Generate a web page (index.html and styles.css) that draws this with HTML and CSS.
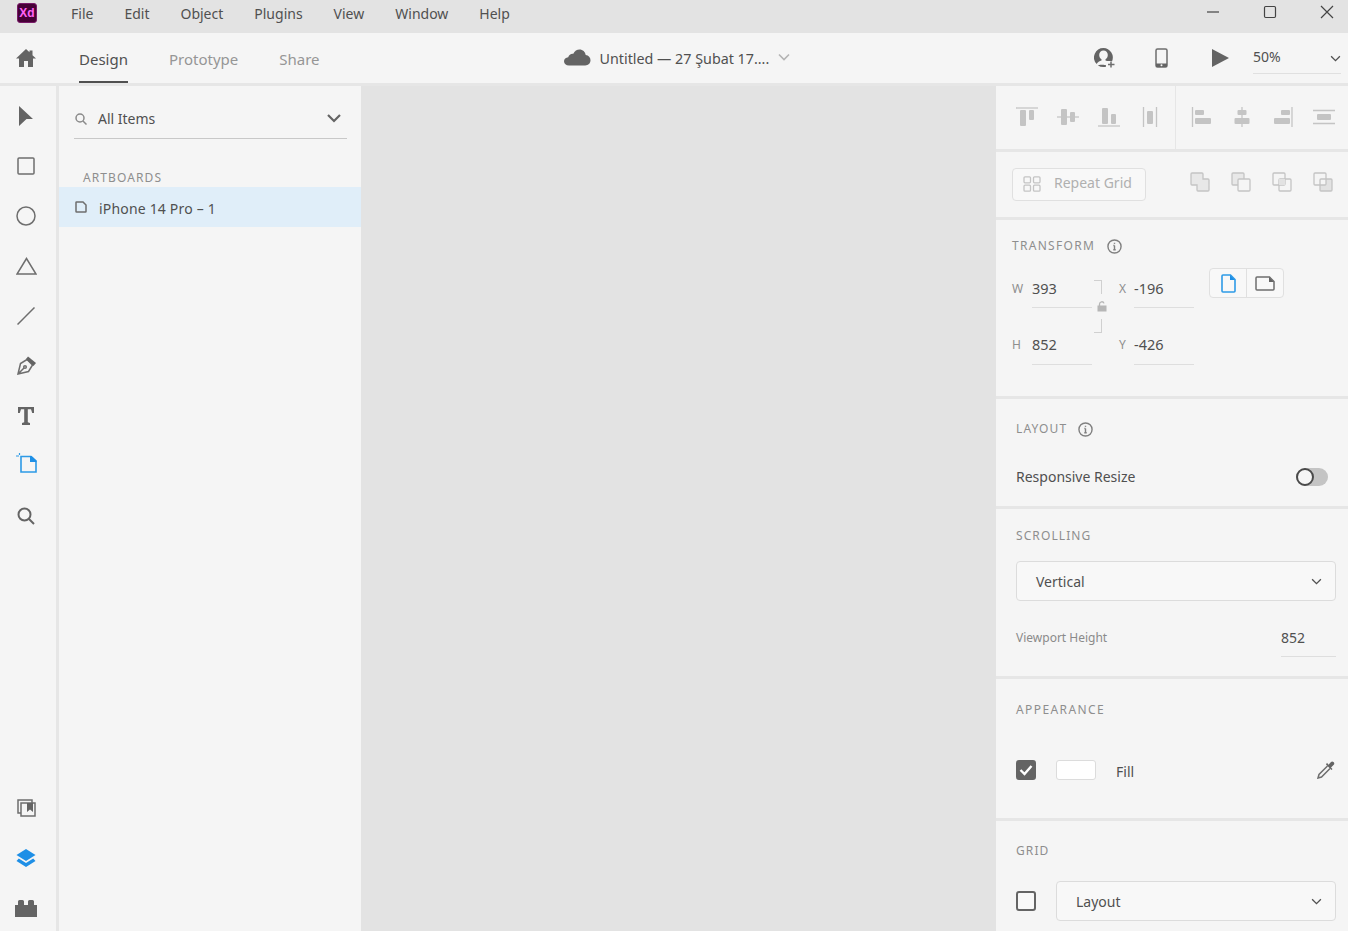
FILE: index.html
```html
<!DOCTYPE html>
<html lang="tr">
<head>
<meta charset="utf-8">
<title>Adobe XD</title>
<link rel="stylesheet" href="styles.css">
</head>
<body>
<div class="app">
  <header class="titlebar">
    <div class="logo">Xd</div>
    <nav class="menu">
      <span>File</span><span>Edit</span><span>Object</span><span>Plugins</span><span>View</span><span>Window</span><span>Help</span>
    </nav>
    <div class="winctl">
      <svg class="wc" viewBox="0 0 14 14"><path d="M1 7h12" /></svg>
      <svg class="wc" viewBox="0 0 14 14"><rect x="1.5" y="1.5" width="11" height="11" rx="1.2" /></svg>
      <svg class="wc" viewBox="0 0 14 14"><path d="M1 1l12 12M13 1L1 13" /></svg>
    </div>
  </header>

  <div class="toolbar">
    <div class="home">
      <svg viewBox="0 0 20 18" width="20" height="18"><path class="fill" d="M10 0L0 9.500h3V18h5v-6h4v6h5V9.500h3L16.500 6.200V1.500h-3v1.800z"/></svg>
    </div>
    <div class="tabs">
      <span class="tab active">Design</span><span class="tab">Prototype</span><span class="tab">Share</span>
    </div>
    <div class="doc">
      <svg viewBox="0 0 27 17" width="27" height="17"><path class="fill" d="M5 16.500C2 16.500 0 14.800 0 12.300c0-2.300 1.800-3.900 4.200-4.100C5 5.700 7 4.500 9.300 4.800 10.500 2 13 .5 15.500.5c3.300 0 5.800 2.300 6.200 5.600 2.900.4 4.800 2.500 4.800 5.200 0 3-2.200 5.200-5.300 5.200z"/></svg>
      <span class="doc-name">Untitled — 27 Şubat 17....</span>
      <svg class="chev light" viewBox="0 0 12 8" width="12" height="8"><path d="M1 1.500l5 5 5-5"/></svg>
    </div>
    <div class="actions">
      <svg viewBox="0 0 21 20" width="21" height="20"><path class="fill" d="M9.500 0a9.500 9.500 0 0 0-6.800 16.100C3.500 14.200 5.500 13 7.500 12.600v-1.300C6 10.400 5.200 8.800 5.200 7c0-2.600 1.800-4.500 4.300-4.500s4.300 1.900 4.300 4.500c0 1.800-.8 3.400-2.300 4.300v1.300c.5.100 1 .3 1.500.5h3.600c.6 0 1 .1 1.400.3A9.500 9.500 0 0 0 9.500 0zM3.800 17.200A9.500 9.500 0 0 0 12 18.700v-1.500h-.1c-1.600-.3-3-.8-8.100 0z"/><path class="stroke" d="M17 13.500v6M14 16.500h6.500"/></svg>
      <svg class="act-device" viewBox="0 0 13 20" width="13" height="20"><rect class="stroke" x="1" y="1" width="11" height="18" rx="1.500"/><rect class="fill" x="1" y="15.500" width="11" height="3.500"/><circle cx="6.500" cy="17.200" r="1" fill="#f5f5f5"/></svg>
      <svg class="act-play" viewBox="0 0 17 18" width="17" height="18"><path class="fill" d="M0 0l17 9-17 9z"/></svg>
      <div class="zoom">
        <span>50%</span>
        <svg class="chev" viewBox="0 0 12 8" width="11" height="7"><path d="M1 1.500l5 5 5-5"/></svg>
      </div>
    </div>
  </div>

  <div class="main">
    <aside class="rail">
      <div class="rail-group">
        <div class="tool"><svg viewBox="0 0 14 20" width="14" height="20"><path class="fill" d="M0 0l14 13H7.500L0 20z"/></svg></div>
        <div class="tool"><svg viewBox="0 0 18 18" width="18" height="18"><rect class="stroke" x="1" y="1" width="16" height="16" rx="1"/></svg></div>
        <div class="tool"><svg viewBox="0 0 20 20" width="20" height="20"><circle class="stroke" cx="10" cy="10" r="9"/></svg></div>
        <div class="tool"><svg viewBox="0 0 21 18" width="21" height="18"><path class="stroke" d="M10.500 1.500L1 17h19z"/></svg></div>
        <div class="tool"><svg viewBox="0 0 18 18" width="18" height="18"><path class="stroke" d="M.5 17.500l17-17"/></svg></div>
        <div class="tool"><svg class="up-1" viewBox="0 0 19 19" width="19" height="19"><path class="stroke" d="M1 18l2.500-10.500L10 3.500l5.500 5.500-4 6.500zM1 18l6-6"/><circle class="stroke" cx="8" cy="11" r="1.300"/><path class="fill" d="M11 .5l8 6.500-2.500 3-7.500-7z"/></svg></div>
        <div class="tool"><svg viewBox="0 0 16 18" width="16" height="18"><path class="fill" d="M0 0h16v6h-1.800L13 2.300H9.800v13l2.200.7v2H4v-2l2.200-.7v-13H3L1.800 6H0z"/></svg></div>
        <div class="tool"><svg class="up-2" viewBox="0 0 21 20" width="21" height="20"><path class="blue-s" d="M5 3.500h10l5 4.500V19H5z"/><path class="blue-f" d="M14 3h1.500l5 4.500V9H14z"/><path class="blue-s thin" d="M0 3h3M3.500 0v2"/></svg></div>
        <div class="tool"><svg viewBox="0 0 18 18" width="18" height="18"><circle class="stroke thick" cx="7.500" cy="7.500" r="6"/><path class="stroke thick" d="M12 12l5 5"/></svg></div>
      </div>
      <div class="rail-group bottom">
        <div class="tool"><svg viewBox="0 0 19 18" width="19" height="18"><path class="stroke" d="M4 14H1V1h14v3"/><rect class="stroke" x="4" y="4" width="14" height="13"/><path class="fill" d="M10 4h6v9l-3-2.500L10 13z"/></svg></div>
        <div class="tool"><svg viewBox="0 0 20 18" width="20" height="18"><path class="blue-f" d="M10 0l9.500 6-9.500 6-9.500-6z"/><path class="blue-f" d="M2.800 9.500l7.200 4.500 7.200-4.500 2.300 2.500-9.500 6-9.500-6z"/></svg></div>
        <div class="tool"><svg viewBox="0 0 22 17" width="22" height="17"><path class="fill" d="M0 5h3V1.500A1.500 1.500 0 0 1 4.500 0h3A1.500 1.500 0 0 1 9 1.500V5h4V1.500A1.500 1.500 0 0 1 14.500 0h3A1.500 1.500 0 0 1 19 1.500V5h3v12H0z"/></svg></div>
      </div>
    </aside>

    <section class="layers">
      <div class="search">
        <svg viewBox="0 0 12 12" width="12" height="12"><circle class="stroke" cx="5" cy="5" r="4"/><path class="stroke" d="M8 8l3.500 3.500"/></svg>
        <span class="search-text">All Items</span>
        <svg class="chev strong" viewBox="0 0 14 9" width="14" height="9"><path d="M1 1l6 6 6-6"/></svg>
      </div>
      <div class="layers-title">ARTBOARDS</div>
      <div class="layer-row">
        <svg viewBox="0 0 12 12" width="12" height="12"><path class="stroke" d="M1 1.500A.5.500 0 0 1 1.500 1H8l3 3v6.500a.5.500 0 0 1-.5.500h-9a.5.500 0 0 1-.5-.5z"/></svg>
        <span class="layer-name">iPhone 14 Pro – 1</span>
      </div>
    </section>

    <div class="canvas"></div>

    <aside class="props">
      <div class="sec aligns">
        <div class="align-group first">
          <div class="ai"><svg viewBox="0 0 24 20" width="24" height="20"><path class="dis-s" d="M1 1h22"/><rect class="dis-f" x="5" y="3" width="6" height="16" rx="1"/><rect class="dis-f" x="14" y="3" width="5" height="10" rx="1"/></svg></div>
          <div class="ai"><svg viewBox="0 0 24 20" width="24" height="20"><path class="dis-s" d="M1 10h22"/><rect class="dis-f" x="5" y="2" width="6" height="16" rx="1"/><rect class="dis-f" x="14" y="5" width="5" height="10" rx="1"/></svg></div>
          <div class="ai"><svg viewBox="0 0 24 20" width="24" height="20"><path class="dis-s" d="M1 19h22"/><rect class="dis-f" x="5" y="1" width="6" height="16" rx="1"/><rect class="dis-f" x="14" y="7" width="5" height="10" rx="1"/></svg></div>
          <div class="ai"><svg viewBox="0 0 24 20" width="24" height="20"><path class="dis-s" d="M5.500 0v20M18.500 0v20"/><rect class="dis-f" x="9" y="4" width="6" height="13" rx="1"/></svg></div>
        </div>
        <div class="align-group">
          <div class="ai"><svg viewBox="0 0 24 20" width="24" height="20"><path class="dis-s" d="M3.500 0v20"/><rect class="dis-f" x="6" y="3" width="9" height="5" rx="1"/><rect class="dis-f" x="6" y="11" width="16" height="6" rx="1"/></svg></div>
          <div class="ai"><svg viewBox="0 0 24 20" width="24" height="20"><path class="dis-s" d="M12 0v20"/><rect class="dis-f" x="7.500" y="3" width="9" height="5" rx="1"/><rect class="dis-f" x="4.500" y="11" width="15" height="6" rx="1"/></svg></div>
          <div class="ai"><svg viewBox="0 0 24 20" width="24" height="20"><path class="dis-s" d="M21 0v20"/><rect class="dis-f" x="10" y="3" width="9" height="5" rx="1"/><rect class="dis-f" x="3" y="11" width="16" height="6" rx="1"/></svg></div>
          <div class="ai"><svg viewBox="0 0 24 20" width="24" height="20"><path class="dis-s" d="M1 3.500h22M1 16.500h22"/><rect class="dis-f" x="5" y="7" width="14" height="6" rx="1"/></svg></div>
        </div>
      </div>

      <div class="sec repeat">
        <div class="rg-btn">
          <svg viewBox="0 0 18 16" width="18" height="16"><rect class="dis-s" x="1" y=".8" width="6.500" height="6" rx="1"/><rect class="dis-s" x="10.500" y=".8" width="6.500" height="6" rx="1"/><rect class="dis-s" x="1" y="9.200" width="6.500" height="6" rx="1"/><rect class="dis-s" x="10.500" y="9.200" width="6.500" height="6" rx="1"/></svg>
          <span class="rg-text">Repeat Grid</span>
        </div>
        <div class="bools">
          <svg viewBox="0 0 20 20" width="20" height="20"><path class="dis-s bf" d="M1 2a1 1 0 0 1 1-1h10a1 1 0 0 1 1 1v5h5a1 1 0 0 1 1 1v10a1 1 0 0 1-1 1H8a1 1 0 0 1-1-1v-5H2a1 1 0 0 1-1-1z"/></svg>
          <svg viewBox="0 0 20 20" width="20" height="20"><rect class="dis-s bf" x="1" y="1" width="12" height="12" rx="1"/><rect class="dis-s wf" x="7" y="7" width="12" height="12" rx="1"/></svg>
          <svg viewBox="0 0 20 20" width="20" height="20"><rect class="dis-s" x="1" y="1" width="12" height="12" rx="1"/><rect class="dis-s" x="7" y="7" width="12" height="12" rx="1"/><rect class="dis-f soft" x="7" y="7" width="6" height="6"/></svg>
          <svg viewBox="0 0 20 20" width="20" height="20"><path class="dis-f soft" d="M13 7h6v12H7v-6h6z"/><rect class="dis-s" x="1" y="1" width="12" height="12" rx="1"/><rect class="dis-s" x="7" y="7" width="12" height="12" rx="1"/></svg>
        </div>
      </div>

      <div class="sec transform">
        <div class="sec-head">
          <span class="label">TRANSFORM</span>
          <svg class="info" viewBox="0 0 16 16" width="15" height="15"><circle cx="8" cy="8" r="7"/><path d="M8 7v4.500M6.700 11.500h2.600M6.800 7H8"/><path d="M8 4v1.200"/></svg>
        </div>
        <div class="tf-body">
          <div class="tf-grid">
            <div class="field cell-w"><span class="axis">W</span><span class="val">393</span></div>
            <div class="link top"></div>
            <div class="field cell-x"><span class="axis">X</span><span class="val">-196</span></div>
            <div class="lock"><svg viewBox="0 0 10 11" width="10" height="11"><path class="dis-s-dark" d="M2.500 5V3a2.300 2.300 0 0 1 4.500-.6"/><rect x=".5" y="4.500" width="9" height="6" fill="#b6b6b6"/></svg></div>
            <div class="link bottom"></div>
            <div class="field cell-h"><span class="axis">H</span><span class="val">852</span></div>
            <div class="field cell-y"><span class="axis">Y</span><span class="val">-426</span></div>
          </div>
          <div class="orient">
            <div class="or-btn"><svg viewBox="0 0 15 19" width="15" height="19"><path class="blue-s" d="M1 2a1 1 0 0 1 1-1h7.500L14 5.500V17a1 1 0 0 1-1 1H2a1 1 0 0 1-1-1z"/><path class="blue-f" d="M9 1l5 5H9z"/></svg></div>
            <div class="or-btn"><svg viewBox="0 0 20 15" width="20" height="15"><path class="stroke" d="M1 2a1 1 0 0 1 1-1h12.500L19 5.500V13a1 1 0 0 1-1 1H2a1 1 0 0 1-1-1z"/><path class="fill" d="M14 1l5 5h-5z"/></svg></div>
          </div>
        </div>
      </div>

      <div class="sec layout">
        <div class="sec-head">
          <span class="label">LAYOUT</span>
          <svg class="info" viewBox="0 0 16 16" width="15" height="15"><circle cx="8" cy="8" r="7"/><path d="M8 7v4.500M6.700 11.500h2.600M6.800 7H8"/><path d="M8 4v1.200"/></svg>
        </div>
        <div class="resp">
          <span>Responsive Resize</span>
          <div class="toggle"><div class="knob"></div></div>
        </div>
      </div>

      <div class="sec scrolling">
        <div class="label">SCROLLING</div>
        <div class="select wide">
          <span>Vertical</span>
          <svg class="chev" viewBox="0 0 12 8" width="11" height="7"><path d="M1 1.500l5 5 5-5"/></svg>
        </div>
        <div class="viewport">
          <span class="vp-label">Viewport Height</span>
          <span class="vp-val">852</span>
        </div>
      </div>

      <div class="sec appearance">
        <div class="label">APPEARANCE</div>
        <div class="fill-row">
          <div class="check on"><svg viewBox="0 0 14 12" width="14" height="12"><path d="M1.500 6l4 4 7-8"/></svg></div>
          <div class="swatch"></div>
          <span class="fill-text">Fill</span>
          <svg class="dropper" viewBox="0 0 18 18" width="18" height="18"><path class="stroke" d="M10.500 5L2 13.500 1 17l3.500-1L13 7.500"/><path class="fill" d="M9 3.500l5.500 5.500 1-1-1.500-1.500 3-3a2 2 0 0 0-3-2.500l-2.500 2.800L10 1.800z"/></svg>
        </div>
      </div>

      <div class="sec grid-sec">
        <div class="label">GRID</div>
        <div class="grid-row">
          <div class="check"></div>
          <div class="select">
            <span>Layout</span>
            <svg class="chev" viewBox="0 0 12 8" width="11" height="7"><path d="M1 1.500l5 5 5-5"/></svg>
          </div>
        </div>
      </div>
    </aside>
  </div>
</div>
</body>
</html>
```
FILE: styles.css
```css
* { box-sizing: border-box; }
html, body { margin: 0; height: 100%; overflow: hidden; }
body {
  font-family: "Noto Sans", "Open Sans", "Liberation Sans", sans-serif;
  font-size: 14px;
  color: #505050;
  background: #f5f5f5;
}
svg { display: block; flex: none; }
.fill { fill: #646464; }
.stroke { fill: none; stroke: #6e6e6e; stroke-width: 1.5; }
.stroke.thick { stroke: #646464; stroke-width: 2; }
.blue-s { fill: none; stroke: #2d9ae6; stroke-width: 1.6; }
.blue-s.thin { stroke-width: 1.2; }
.blue-f { fill: #1e8fe6; }
.dis-s { fill: none; stroke: #c4c4c4; stroke-width: 1.300; }
.dis-f { fill: #c4c4c4; }
.dis-f.soft { fill: #e2e2e2; }
.dis-s.bf { fill: #e8e8e8; }
.dis-s.wf { fill: #f5f5f5; }
.dis-s-dark { fill: none; stroke: #b6b6b6; stroke-width: 1.300; }
.up-1 { margin-top: -2px; }
.up-2 { margin-top: -6px; }

.app { display: flex; flex-direction: column; height: 931px; }

.titlebar { height: 33px; background: #e3e3e3; display: flex; align-items: center; padding-left: 17px; flex: none; }
.logo {
  width: 20px; height: 20px; margin-top: -7px; border-radius: 3px; background: #470137; border: 1px solid #7a1a69;
  color: #ff61f6; font: 700 12px/18px "Liberation Sans", sans-serif; text-align: center;
}
.menu { display: flex; gap: 31px; margin-left: 34px; margin-top: -7px; font-size: 14px; color: #505050; }
.winctl { margin-left: auto; display: flex; gap: 43px; padding-right: 14px; margin-top: -9px; }
.wc { width: 14px; height: 14px; fill: none; stroke: #444; stroke-width: 1.200; }

.toolbar { height: 50px; background: #f5f5f5; display: flex; align-items: center; position: relative; flex: none; }
.home { width: 79px; padding-left: 16px; margin-top: -1px; }
.tabs { display: flex; gap: 41px; height: 50px; font-size: 15px; color: #969696; }
.tab { height: 50px; line-height: 52px; }
.tab.active { color: #505050; border-bottom: 2px solid #505050; }
.doc { display: flex; align-items: center; margin-left: 244px; margin-top: -2px; }
.doc-name { margin: 0 9px 0 9px; padding-top: 2px; font-size: 14.300px; white-space: nowrap; }
.chev { fill: none; stroke: #505050; stroke-width: 1.500; }
.chev.light { stroke: #b4b4b4; stroke-width: 1.600; }
.chev.strong { stroke: #646464; stroke-width: 2.200; }
.actions { margin-left: auto; display: flex; align-items: center; padding-right: 7px; }
.act-device { margin-left: 40px; }
.act-play { margin-left: 44px; }
.zoom { width: 88px; height: 30px; margin-left: 24px; border-bottom: 1px solid #e0e0e0; display: flex; align-items: center; justify-content: space-between; font-size: 14px; margin-top: 1px; }
.zoom span { margin-top: -4px; }

.main { flex: 1; display: flex; border-top: 3px solid #e6e6e6; min-height: 0; }

.rail { width: 59px; border-right: 3px solid #e6e6e6; background: #f5f5f5; display: flex; flex-direction: column; justify-content: space-between; padding: 5px 4px 0 0; flex: none; }
.rail-group.bottom { margin-bottom: -2px; }
.tool { height: 50px; display: flex; align-items: center; justify-content: center; }

.layers { width: 302px; background: #f5f5f5; flex: none; }
.search { margin: 17px 14px 0 15px; height: 36px; border-bottom: 1px solid #c8c8c8; display: flex; align-items: center; padding: 0 6px 4px 1px; }
.search .stroke { stroke: #8a8a8a; }
.search-text { margin-left: 11px; font-size: 14px; }
.search .chev { margin-left: auto; }
.layers-title { margin: 30px 0 0 24px; height: 18px; line-height: 18px; font-size: 12px; letter-spacing: 1.100px; color: #8e8e8e; }
.layer-row { height: 40px; background: #e0eef9; display: flex; align-items: center; padding-left: 16px; gap: 12px; font-size: 14px; }
.layer-name { margin-top: 2px; letter-spacing: .18px; }

.canvas { flex: 1; background: #e3e3e3; }

.props { width: 352px; background: #f5f5f5; flex: none; display: flex; flex-direction: column; }
.sec { border-bottom: 3px solid #e6e6e6; flex: none; }
.aligns { height: 66px; display: flex; }
.align-group { display: flex; gap: 17px; padding: 21px 0 0 13px; }
.align-group.first { width: 180px; padding-left: 19px; border-right: 1px solid #e6e6e6; }
.ai { width: 24px; height: 20px; }

.repeat { height: 68px; display: flex; align-items: center; padding-left: 16px; }
.rg-btn { width: 134px; height: 33px; border: 1px solid #e0e0e0; border-radius: 4px; background: #f8f8f8; display: flex; align-items: center; gap: 13px; padding-left: 10px; color: #b0b0b0; font-size: 14px; margin-top: -1px; }
.rg-text { margin-top: -3px; }
.bools { display: flex; gap: 21px; margin-left: 44px; margin-top: -5px; }

.label { font-size: 12px; letter-spacing: 1.100px; color: #8e8e8e; line-height: 16px; }
.sec-head { display: flex; align-items: center; gap: 12px; }
.layout .sec-head { gap: 11px; }
.transform .label { letter-spacing: 1.300px; }
.appearance .label { letter-spacing: 1.400px; }
.info { fill: none; stroke: #808080; stroke-width: 1.500; }

.transform { height: 179px; padding: 18px 0 0 16px; }
.tf-body { display: flex; margin-top: 14px; }
.tf-grid { display: grid; grid-template-columns: 80px 27px 90px; grid-template-rows: 40px 17px 40px; width: 197px; }
.field { display: flex; height: 40px; }
.axis { width: 20px; font-size: 12px; color: #8e8e8e; line-height: 42px; flex: none; }
.val { flex: 1; line-height: 40px; font-size: 14.500px; border-bottom: 1px solid #dedede; height: 40px; }
.cell-w { grid-column: 1; grid-row: 1; }
.cell-h { grid-column: 1; grid-row: 3; }
.cell-x { grid-column: 3; grid-row: 1; padding-right: 15px; }
.cell-y { grid-column: 3; grid-row: 3; padding-right: 15px; }
.cell-x .axis, .cell-y .axis { width: 15px; }
.cell-h .axis, .cell-y .axis { line-height: 40px; }
.cell-h .val, .cell-y .val { line-height: 38px; }
.link { width: 8px; height: 14px; border-right: 1px solid #d0d0d0; }
.link.top { grid-column: 2; grid-row: 1; border-top: 1px solid #d0d0d0; margin: 12px 0 0 2px; }
.lock { grid-column: 2; grid-row: 1 / 3; margin: 33px 0 0 5px; }
.link.bottom { grid-column: 2; grid-row: 3; margin: -6px 0 0 2px; border-bottom: 1px solid #d0d0d0; }
.orient { display: flex; width: 75px; height: 30px; border: 1px solid #e0e0e0; border-radius: 4px; background: #f8f8f8; }
.or-btn { flex: 1; display: flex; align-items: center; justify-content: center; }
.or-btn + .or-btn { border-left: 1px solid #e0e0e0; }

.layout { height: 110px; padding: 22px 20px 0 20px; }
.resp { display: flex; align-items: center; justify-content: space-between; margin-top: 30px; font-size: 14px; }
.toggle { width: 32px; height: 18px; border-radius: 9px; background: #c4c4c4; }
.knob { width: 18px; height: 18px; border-radius: 50%; background: #f5f5f5; border: 2.500px solid #4a4a4a; }

.scrolling { height: 170px; padding: 19px 12px 0 20px; }
.select { flex: 1; height: 40px; border: 1px solid #dcdcdc; border-radius: 4px; background: #f8f8f8; display: flex; align-items: center; justify-content: space-between; padding: 0 13px 0 19px; font-size: 14px; }
.select.wide { margin-top: 17px; }
.viewport { display: flex; justify-content: space-between; margin-top: 20px; align-items: flex-start; }
.vp-label { font-size: 12px; color: #8a8a8a; line-height: 34px; }
.vp-val { width: 55px; height: 36px; line-height: 34px; border-bottom: 1px solid #dedede; font-size: 14px; }

.appearance { height: 142px; padding: 23px 12px 0 20px; }
.fill-row { display: flex; align-items: center; margin-top: 41px; }
.check { width: 20px; height: 20px; border-radius: 3px; border: 2px solid #646464; display: flex; align-items: center; justify-content: center; flex: none; background: #f8f8f8; }
.check.on { background: #646464; }
.check svg { fill: none; stroke: #fff; stroke-width: 2.400; }
.swatch { width: 40px; height: 20px; background: #fff; border: 1px solid #dcdcdc; border-radius: 3px; margin-left: 20px; }
.fill-text { margin-left: 20px; font-size: 14px; margin-top: 3px; }
.dropper { margin-left: auto; margin-right: 1px; }

.grid-sec { border-bottom: 0; padding: 22px 12px 0 20px; }
.grid-row { display: flex; align-items: center; gap: 20px; margin-top: 22px; }
```
